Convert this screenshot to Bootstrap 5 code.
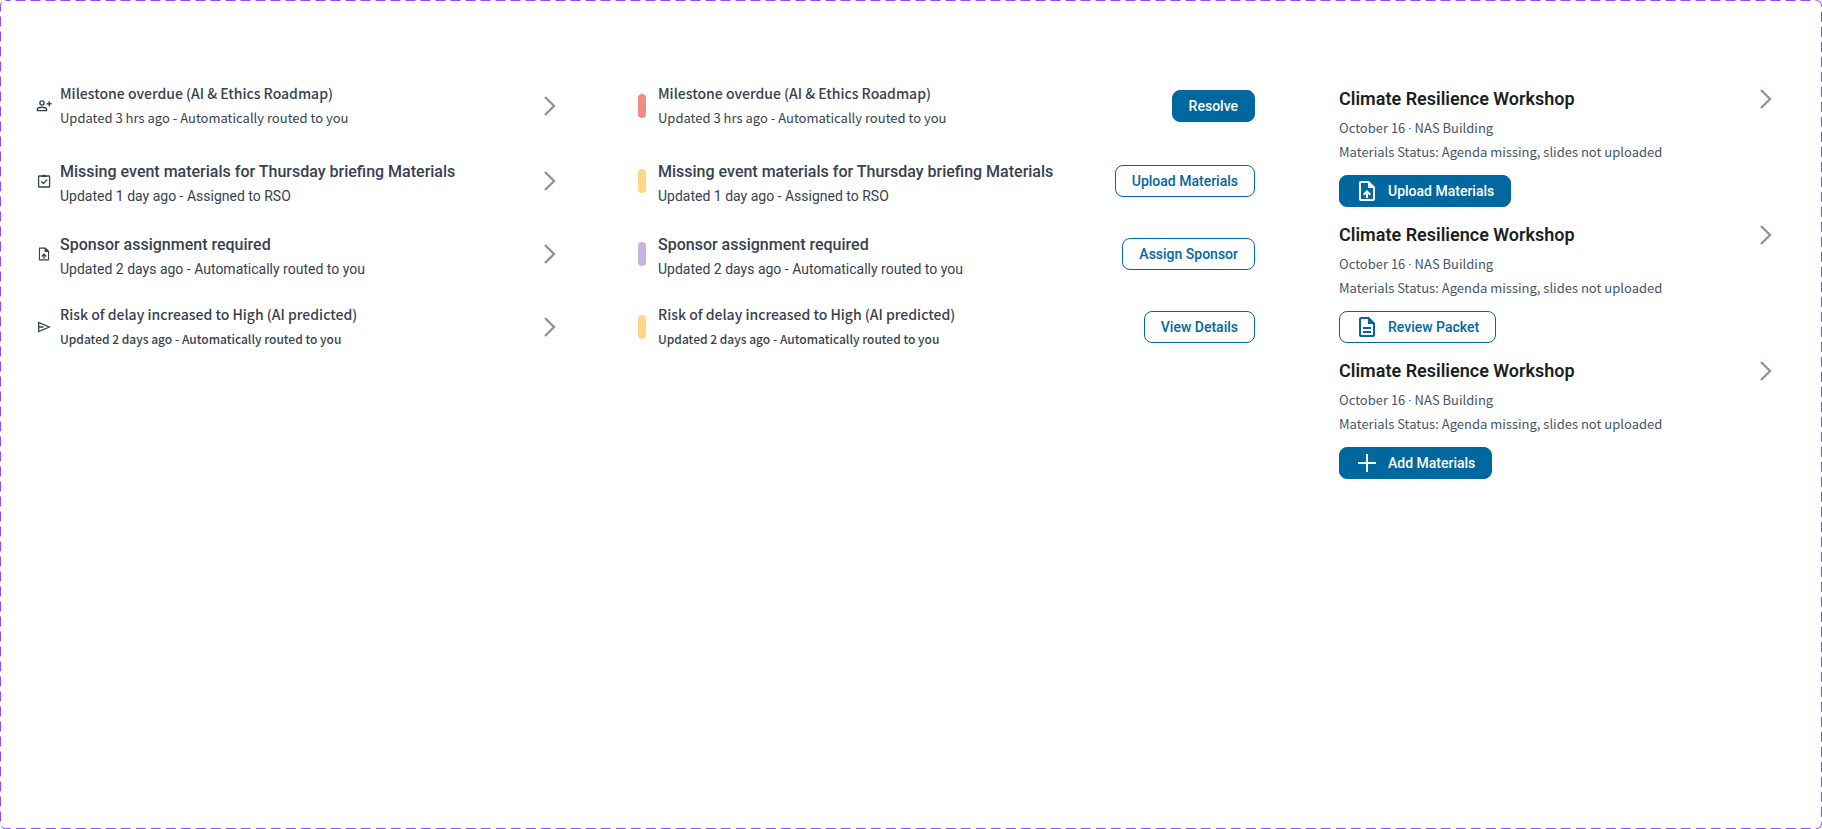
<!DOCTYPE html>
<html lang="en">
<head>
<meta charset="utf-8">
<meta name="viewport" content="width=device-width, initial-scale=1">
<title>Action items</title>
<link href="https://cdn.jsdelivr.net/npm/bootstrap@5.3.0/dist/css/bootstrap.min.css" rel="stylesheet">
<style>
  :root { --brand: #00689f; --ink: #374151; --muted: #475569; --source: "Noto Sans CJK SC", sans-serif; --robo: Roboto, sans-serif; }
  body { background: #fff; color: var(--ink); font-family: var(--robo); }
  .board { padding: 76px 48px 48px 36px; }
  .board-frame { position: absolute; inset: 0; width: 100%; height: 100%; pointer-events: none; }
  .board-frame rect { x: .5px; y: .5px; width: calc(100% - 1px); height: calc(100% - 1px); fill: none; stroke: #9747ff; stroke-dasharray: 10 5; stroke-dashoffset: 5; }
  .board-cols { display: grid; grid-template-columns: 522fr 617fr 439fr; column-gap: 80px; align-items: start; }
  .feed-row { min-height: 73px; }
  .feed-row:first-child { min-height: 60px; margin-bottom: 8px; }
  .feed-title { font-size: 16px; line-height: 24px; font-weight: 500; }
  .feed-sub { font-size: 14px; line-height: 24px; font-weight: 400; }
  .feed-text { padding-top: 6px; }
  .face-source .feed-text { padding: 0 0 2px; }
  .face-source .feed-title { font-family: var(--source); font-size: 14px; line-height: 26px; font-weight: 500; }
  .face-source .feed-sub { font-family: var(--source); font-size: 13px; }
  .face-strong .feed-sub { font-size: 12px; font-weight: 500; }
  .feed-icon { width: 16px; height: 16px; }
  .tag-bar { width: 8px; height: 24px; margin-right: 12px; border-radius: 4px; }
  .tag-red { background: #f28b82; } .tag-yellow { background: #fdd987; } .tag-violet { background: #c5b3e0; }
  .chev { width: 14px; height: 20px; fill: none; stroke: #8c939d; stroke-width: 2.4; }
  .btn-brand, .btn-line { --bs-btn-font-size: 14px; --bs-btn-font-weight: 500; --bs-btn-line-height: 20px; --bs-btn-padding-x: 16px; --bs-btn-padding-y: 5px; --bs-btn-border-radius: 8px; --bs-btn-border-color: var(--brand); font-family: var(--robo); }
  .btn-brand { --bs-btn-bg: var(--brand); --bs-btn-color: #fff; --bs-btn-hover-bg: #00557f; --bs-btn-hover-color: #fff; }
  .btn-line { --bs-btn-bg: #fff; --bs-btn-color: var(--brand); --bs-btn-hover-bg: #e8f3f9; --bs-btn-hover-color: var(--brand); }
  .btn-glyph { width: 22px; height: 20px; margin-right: 10px; }
  .event-list { row-gap: 13px; }
  .event-head { margin-bottom: 2px; }
  .event-title { font-size: 18px; line-height: 30px; font-weight: 600; color: #1b1f23; }
  .event-meta { font-family: var(--source); font-size: 13px; line-height: 24px; color: var(--muted); }
  .event-dot { font-family: var(--robo); line-height: 1; }
  .event-list .btn { margin-top: 11px; }
</style>
</head>
<body>
<svg class="d-none">
  <symbol id="i-person" viewBox="0 0 16 16"><g fill="none" stroke="currentColor" stroke-width="1.4"><circle cx="6" cy="5" r="2.100"/><path d="M1.400 12.600v-1.200C1.400 9.800 4 9.200 6 9.200s4.600.6 4.600 2.200v1.200zM13.200 3.200v5M10.700 5.700h5"/></g></symbol>
  <symbol id="i-check" viewBox="0 0 16 16"><g fill="none" stroke="currentColor" stroke-width="1.300"><rect x="2.600" y="3" width="11" height="11" rx=".6"/><path d="M5.400 8.500l2 2 3.800-3.900"/></g><path d="M5.500 2.400h1.300a1.400 1.400 0 0 1 2.600 0h1.300v1.600H5.500z" fill="currentColor"/></symbol>
  <symbol id="i-upload" viewBox="0 0 16 20"><path d="M2 0h8l6 6v12a2 2 0 0 1-2 2H2a2 2 0 0 1-2-2V2a2 2 0 0 1 2-2zm0 2v16h12V7H9V2zM7 17v-4.200l-1.600 1.600L4 13l4-4 4 4-1.400 1.400L9 12.800V17z" fill="currentColor" fill-rule="evenodd"/></symbol>
  <symbol id="i-doc" viewBox="0 0 16 20"><path d="M2 0h8l6 6v12a2 2 0 0 1-2 2H2a2 2 0 0 1-2-2V2a2 2 0 0 1 2-2zm0 2v16h12V7H9V2zM4 10h8v2H4zM4 14h8v2H4z" fill="currentColor" fill-rule="evenodd"/></symbol>
  <symbol id="i-send" viewBox="0 0 16 16"><path d="M2.700 3.500v9L13.200 8zM3 8h4.500" fill="none" stroke="currentColor" stroke-width="1.300"/></symbol>
  <symbol id="i-plus" viewBox="0 0 20 20"><path d="M10 1v18M1 10h18" fill="none" stroke="currentColor" stroke-width="2"/></symbol>
  <symbol id="i-chev" viewBox="0 0 14 20"><path d="M1 1l9 9-9 9"/></symbol>
</svg>
<main class="board position-relative min-vh-100">
  <svg class="board-frame" aria-hidden="true"><rect rx="5"/></svg>
  <div class="board-cols">
    <section>
      <article class="feed-row face-source d-flex align-items-center"><svg class="feed-icon me-2"><use href="#i-person"/></svg><div class="feed-text flex-grow-1"><div class="feed-title">Milestone overdue (AI &amp; Ethics Roadmap)</div><div class="feed-sub">Updated 3 hrs ago - Automatically routed to you</div></div><svg class="chev"><use href="#i-chev"/></svg></article>
      <article class="feed-row d-flex align-items-center"><svg class="feed-icon me-2"><use href="#i-check"/></svg><div class="feed-text flex-grow-1"><div class="feed-title">Missing event materials for Thursday briefing Materials</div><div class="feed-sub">Updated 1 day ago - Assigned to RSO</div></div><svg class="chev"><use href="#i-chev"/></svg></article>
      <article class="feed-row d-flex align-items-center"><svg class="feed-icon me-2" viewBox="-4 -2 24 24"><use href="#i-upload" width="16" height="20"/></svg><div class="feed-text flex-grow-1"><div class="feed-title">Sponsor assignment required</div><div class="feed-sub">Updated 2 days ago - Automatically routed to you</div></div><svg class="chev"><use href="#i-chev"/></svg></article>
      <article class="feed-row face-source face-strong d-flex align-items-center"><svg class="feed-icon me-2"><use href="#i-send"/></svg><div class="feed-text flex-grow-1"><div class="feed-title">Risk of delay increased to High (AI predicted)</div><div class="feed-sub">Updated 2 days ago - Automatically routed to you</div></div><svg class="chev"><use href="#i-chev"/></svg></article>
    </section>
    <section>
      <article class="feed-row face-source d-flex align-items-center"><span class="tag-bar tag-red"></span><div class="feed-text flex-grow-1"><div class="feed-title">Milestone overdue (AI &amp; Ethics Roadmap)</div><div class="feed-sub">Updated 3 hrs ago - Automatically routed to you</div></div><button type="button" class="btn btn-brand">Resolve</button></article>
      <article class="feed-row d-flex align-items-center"><span class="tag-bar tag-yellow"></span><div class="feed-text flex-grow-1"><div class="feed-title">Missing event materials for Thursday briefing Materials</div><div class="feed-sub">Updated 1 day ago - Assigned to RSO</div></div><button type="button" class="btn btn-line">Upload Materials</button></article>
      <article class="feed-row d-flex align-items-center"><span class="tag-bar tag-violet"></span><div class="feed-text flex-grow-1"><div class="feed-title">Sponsor assignment required</div><div class="feed-sub">Updated 2 days ago - Automatically routed to you</div></div><button type="button" class="btn btn-line">Assign Sponsor</button></article>
      <article class="feed-row face-source face-strong d-flex align-items-center"><span class="tag-bar tag-yellow"></span><div class="feed-text flex-grow-1"><div class="feed-title">Risk of delay increased to High (AI predicted)</div><div class="feed-sub">Updated 2 days ago - Automatically routed to you</div></div><button type="button" class="btn btn-line">View Details</button></article>
    </section>
    <section class="event-list ps-1 pt-2 d-grid">
      <article><div class="event-head d-flex align-items-center justify-content-between"><h2 class="event-title m-0">Climate Resilience Workshop</h2><svg class="chev"><use href="#i-chev"/></svg></div><div class="event-meta">October 16 <span class="event-dot">·</span> NAS Building</div><div class="event-meta">Materials Status: Agenda missing, slides not uploaded</div><button type="button" class="btn btn-brand d-flex align-items-center"><svg class="btn-glyph"><use href="#i-upload"/></svg>Upload Materials</button></article>
      <article><div class="event-head d-flex align-items-center justify-content-between"><h2 class="event-title m-0">Climate Resilience Workshop</h2><svg class="chev"><use href="#i-chev"/></svg></div><div class="event-meta">October 16 <span class="event-dot">·</span> NAS Building</div><div class="event-meta">Materials Status: Agenda missing, slides not uploaded</div><button type="button" class="btn btn-line d-flex align-items-center"><svg class="btn-glyph"><use href="#i-doc"/></svg>Review Packet</button></article>
      <article><div class="event-head d-flex align-items-center justify-content-between"><h2 class="event-title m-0">Climate Resilience Workshop</h2><svg class="chev"><use href="#i-chev"/></svg></div><div class="event-meta">October 16 <span class="event-dot">·</span> NAS Building</div><div class="event-meta">Materials Status: Agenda missing, slides not uploaded</div><button type="button" class="btn btn-brand d-flex align-items-center"><svg class="btn-glyph"><use href="#i-plus"/></svg>Add Materials</button></article>
    </section>
  </div>
</main>
<script src="https://cdn.jsdelivr.net/npm/bootstrap@5.3.0/dist/js/bootstrap.bundle.min.js"></script>
</body>
</html>
